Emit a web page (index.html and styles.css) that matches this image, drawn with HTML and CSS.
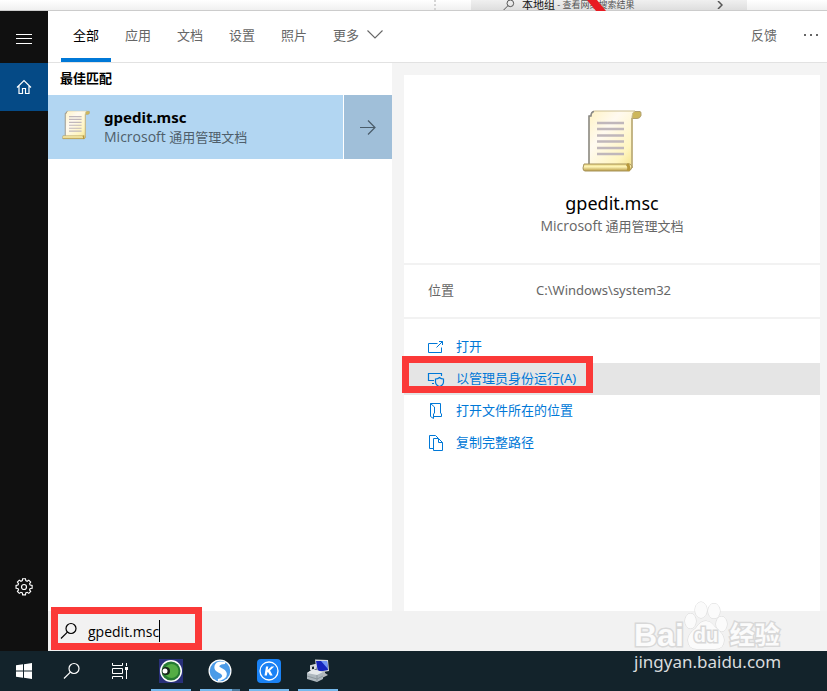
FILE: index.html
```html
<!DOCTYPE html>
<html lang="zh-CN">
<head>
<meta charset="utf-8">
<title>gpedit.msc</title>
<link rel="stylesheet" href="styles.css">
</head>
<body>
<svg class="defs" aria-hidden="true">
  <defs>
    <linearGradient id="paper" x1="0" y1="0" x2="1" y2="1">
      <stop offset="0" stop-color="#fff3c4"/><stop offset=".35" stop-color="#fffaf0"/><stop offset=".75" stop-color="#fff5c0"/><stop offset="1" stop-color="#f3df80"/>
    </linearGradient>
    <linearGradient id="roll" x1="0" y1="0" x2="0" y2="1">
      <stop offset="0" stop-color="#e6d27c"/><stop offset=".4" stop-color="#fff6b8"/><stop offset="1" stop-color="#b99b45"/>
    </linearGradient>
    <symbol id="scroll" viewBox="0 0 60 62">
      <path d="M50 1.500h8q1 0 1 2v2q-1 3-4 3h-5z" fill="#cdb75c" stroke="#b0a070"/>
      <path d="M7 55V6h2q0-5 4-5h40q-3 1-3 6v51H7z" fill="url(#paper)" stroke="#cdbf92"/>
      <path d="M7 54V6h2q0-4 3-4.500" fill="none" stroke="#8a8a88" stroke-width="1.500"/>
      <path d="M50 8v50" fill="none" stroke="#b9a873" stroke-width="1.500"/>
      <path d="M2 54h43q4-1 5 3-1 4-4 4H3q-2 0-2-3z" fill="url(#roll)" stroke="#a6935a"/>
      <path d="M45 54q3 3 1 7" fill="none" stroke="#b8993c" stroke-width="3"/>
      <path d="M15 13h27M15 19h27M15 25.500h27M15 31.500h27M15 38h27M15 44h27" stroke="#c0b7bb" stroke-width="2.500"/>
    </symbol>
    <symbol id="search" viewBox="0 0 18 18">
      <circle cx="11" cy="6.500" r="5" fill="none" stroke="currentColor" stroke-width="1.200"/>
      <path d="M7.400 10.100 1 16.500" fill="none" stroke="currentColor" stroke-width="1.200"/>
    </symbol>
  </defs>
</svg>

<div class="backdrop">
  <span class="dots"></span>
  <div class="suggestion">
    <svg class="mini" viewBox="0 0 18 18"><use href="#search"/></svg>
    <span class="suggestion-name">本地组</span><span class="suggestion-note">&nbsp;- 查看网络搜索结果</span>
    <svg class="more-arrow" viewBox="0 0 6 8"><path d="M1 0l4 4-4 4" fill="none" stroke="#555" stroke-width="1.500"/></svg>
    <svg class="stroke" viewBox="0 0 20 11"><path d="M0 0h10l9 11H9z" fill="#e81b22"/></svg>
  </div>
</div>

<div class="panel">
  <nav class="rail" aria-label="导航">
    <button class="rail-button menu" aria-label="菜单"><svg width="16" height="10" viewBox="0 0 16 10"><path d="M0 .5h16M0 4.500h16M0 9.500h16" stroke="#fff"/></svg></button>
    <button class="rail-button home" aria-label="主页"><svg width="16" height="16" viewBox="0 0 16 16"><path d="M1 8.500 8 1.500l7 7M3 7v7.500h3.500V9.500h3v5H13V7" fill="none" stroke="#fff" stroke-width="1.200"/></svg></button>
    <button class="rail-button settings" aria-label="设置"><svg width="18" height="18" viewBox="0 0 18 18" fill="none" stroke="#fff" stroke-width="1.200"><path d="M7.500 1.500h3l.3 2 1.500.7 1.700-1.200 2 2.100-1.200 1.700.6 1.400 2.100.3v3l-2.100.3-.6 1.400 1.200 1.700-2 2-1.700-1.100-1.500.6-.3 2.100h-3l-.3-2.100-1.500-.6L4 16.900l-2-2 1.200-1.700-.6-1.400-2-.3v-3l2-.3.600-1.400L2 5.100 4 3l1.700 1.200 1.500-.7z" transform="translate(.5 -.7) scale(.95)"/><circle cx="9" cy="9" r="2.500"/></svg></button>
  </nav>

  <div class="content">
    <header class="tabs">
      <button class="tab active">全部</button>
      <button class="tab">应用</button>
      <button class="tab">文档</button>
      <button class="tab">设置</button>
      <button class="tab">照片</button>
      <button class="tab">更多<svg width="16" height="9" viewBox="0 0 16 9"><path d="M.5.500 8 8 15.500.500" fill="none" stroke="#666" stroke-width="1.100"/></svg></button>
      <button class="tab feedback">反馈</button>
      <button class="tab dots-button" aria-label="更多选项"><svg width="16" height="2" viewBox="0 0 16 2"><path d="M1 0h2v2H1zM7 0h2v2H7zM13 0h2v2h-2z" fill="#666"/></svg></button>
    </header>

    <main class="columns">
      <section class="results">
        <h2 class="group">最佳匹配</h2>
        <div class="result">
          <button class="result-main">
            <svg class="result-icon" viewBox="0 0 60 62"><use href="#scroll"/></svg>
            <span class="result-text"><strong>gpedit.msc</strong><span><span class="latin">Microsoft</span> 通用管理文档</span></span>
          </button>
          <button class="result-open" aria-label="展开"><svg width="18" height="16" viewBox="0 0 18 16"><path d="M1 8.500h15M9 1.500l7 7-7 7" fill="none" stroke="#4a5c6a" stroke-width="1.200"/></svg></button>
        </div>
      </section>

      <section class="detail">
        <div class="card">
          <div class="hero">
            <svg class="hero-icon" viewBox="0 0 60 62"><use href="#scroll"/></svg>
            <h1>gpedit.msc</h1>
            <p><span class="latin">Microsoft</span> 通用管理文档</p>
          </div>
          <dl class="place"><dt>位置</dt><dd>C:\Windows\system32</dd></dl>
          <div class="actions">
            <button class="action"><svg viewBox="0 0 16 16"><path d="M9.500 4.500h-9v9h13v-5M8.500 8.500l6-6M11 2.500h3.500V6"/></svg>打开</button>
            <button class="action current"><svg viewBox="0 0 16 16"><path d="M6 9.500H.5v-7h13V5M4 12.500h2" stroke-width="1.200"/><path d="M11.500 6.500Q13 8 15.500 8v3q0 3-4 4.500-4-1.500-4-4.500V8q2.500 0 4-1.500z" stroke-width="1.200"/></svg>以管理员身份运行(A)<span class="mark mark-action"></span></button>
            <button class="action"><svg viewBox="0 0 16 16"><path d="M5 .5h7.500v9.500l1 1v2.500H5M2.500.5v13l3 2V11l1-1V4z"/><path d="M2.500.5H5"/></svg>打开文件所在的位置</button>
            <button class="action"><svg viewBox="0 0 16 16"><path d="M5 13.500H1.500V.500h6L10 3M5.500 3.500h5l4 4v8h-9zM10.500 3.500v4h4"/></svg>复制完整路径</button>
          </div>
        </div>
      </section>
    </main>

    <label class="searchbar">
      <svg width="18" height="18"><use href="#search"/></svg>
      <span class="field"><input class="latin" type="text" value="gpedit.msc" size="9" aria-label="搜索"><span class="caret"></span></span>
      <span class="mark mark-search"></span>
    </label>
  </div>
</div>

<footer class="taskbar">
  <button class="task" aria-label="开始"><svg width="16" height="16" viewBox="0 0 16 16"><path d="M0 2.300 7 1.300v6.200H0zM8 1.200 16 0v7.500H8zM0 8.500h7v6.200l-7-1zM8 8.500h8V16l-8-1.200z" fill="#fff"/></svg></button>
  <button class="task" aria-label="搜索"><svg width="18" height="18" color="#fff"><use href="#search"/></svg></button>
  <button class="task" aria-label="任务视图"><svg width="18" height="16" viewBox="0 0 18 16" fill="none" stroke="#fff"><path d="M1.500 0v2.500h10V0M1.500 16v-2.500h10V16M1.500 5.500h10v5h-10zM15.500 0v3M15.500 7v9"/><path d="M14 4h3v3h-3z" fill="#fff" stroke="none"/></svg></button>
  <button class="task app" aria-label="录像"><svg width="24" height="24" viewBox="0 0 24 24"><path d="M0 0h24v24H0z" fill="#29307a"/><circle cx="12" cy="12" r="11" fill="#fff"/><circle cx="12" cy="12" r="9.500" fill="#267a33"/><circle cx="12.500" cy="12" r="7" fill="#54ad45"/><circle cx="7" cy="12" r="4" fill="#152419"/><circle cx="6" cy="12" r="2.500" fill="#fff"/></svg></button>
  <button class="task app multi" aria-label="搜狗"><svg width="24" height="24" viewBox="0 0 24 24"><circle cx="12" cy="12" r="11.500" fill="#fff"/><circle cx="12" cy="12" r="10.300" fill="#4b9be8"/><path d="M17 4Q9 2 7.500 7q-1 4 4 6 4.500 2 3.500 5-1.500 3-5 3 6-1 7.500-4 1.500-4-3.500-6.500-4.500-2-3.500-4Q12 4 17 4z" fill="#fff" stroke="#fff" stroke-width="2"/></svg></button>
  <button class="task app" aria-label="酷狗"><svg width="24" height="24" viewBox="0 0 24 24"><rect width="24" height="24" rx="4" fill="#1a82f5"/><circle cx="12" cy="12" r="9" fill="none" stroke="#fff" stroke-width="1.300"/><path d="M9 7.500h2.300l-.6 3.500 3.800-3.500h2.800L13 11.500l2.700 5H13l-2-3.500-.6.500-.5 3H7.500z" fill="#fff"/></svg></button>
  <button class="task app" aria-label="管理工具"><svg width="24" height="24" viewBox="0 0 24 24"><path d="M9 .5 22 1l1 11-12 2z" fill="#d5d8dc"/><path d="M10 2l11 0 1 9-10 2z" fill="#1525bd"/><path d="m15 2 6 0 1 8z" fill="#6d92f5"/><path d="m14 13 5-1v2l3 2-6 3-3-3z" fill="#b4b8bc"/><path d="m1 14 6-4 10 3v7l-6 3-10-3z" fill="#aeb8be"/><path d="m1 14 6-4 10 3-6 3z" fill="#e6eaec"/><path d="m1 17 10 3 6-3M11 16v6" fill="none" stroke="#8b969c"/><path d="M5 11V7l4-1v4" fill="none" stroke="#d5d9dc" stroke-width="2"/></svg></button>
</footer>

<div class="watermark" aria-hidden="true">
  <div class="watermark-logo">
    <span>Bai</span>
    <span class="paw"><svg viewBox="0 0 44 50" fill="#fbfbfb" stroke="#d8d8d8"><ellipse cx="17" cy="9" rx="6" ry="8"/><ellipse cx="30" cy="10" rx="6" ry="7.500"/><ellipse cx="6.500" cy="20" rx="5.500" ry="7.500"/><ellipse cx="37.500" cy="23" rx="5.500" ry="7.500"/><path d="M22 20q5 0 9 6 9 7 9 13 0 9-9 9H13q-9 0-9-9 0-6 8-12 4-7 10-7z"/></svg><b>du</b></span>
    <span class="watermark-cn">经验</span>
  </div>
  <div class="watermark-url">jingyan.baidu.com</div>
</div>
</body>
</html>
```
FILE: styles.css
```css
* { box-sizing: border-box; }

body {
  position: relative;
  display: flex;
  flex-direction: column;
  min-height: 100vh;
  margin: 0;
  overflow: hidden;
  color: #000;
  background: #fff;
  font: 13px/20px "Noto Sans", "Noto Sans CJK SC", sans-serif;
}

button {
  margin: 0;
  padding: 0;
  border: 0;
  background: none;
  color: inherit;
  font: inherit;
  text-align: left;
}

svg { flex: none; }
h1, h2, p, dl, dd { margin: 0; }
.defs { position: absolute; width: 0; height: 0; }
.latin { font-family: "Open Sans", sans-serif; font-size: 14px; }

.backdrop {
  display: flex;
  height: 11px;
  border-bottom: 1px solid #ccc;
  background: linear-gradient(#fff, #f0f0f0);
}
.dots { width: 2px; margin-left: 434px; border-left: 2px dotted #d5d5d5; }
.suggestion {
  position: relative;
  display: flex;
  align-items: center;
  width: 276px;
  height: 10px;
  margin-left: 35px;
  padding-left: 32px;
  background: linear-gradient(#f0f0f0, #dedede);
  line-height: 10px;
  white-space: nowrap;
  color: #555;
}
.mini { width: 12px; height: 12px; margin-right: 7px; color: #333; }
.suggestion-name { color: #111; font-size: 11px; }
.suggestion-note { font-size: 9px; }
.more-arrow { width: 6px; height: 8px; margin: 0 24px 0 auto; }
.stroke { position: absolute; left: 116px; top: 0; width: 20px; height: 11px; }

.panel { display: flex; flex: 1; }
.rail { display: flex; flex-direction: column; width: 48px; padding-bottom: 40px; background: #101010; }
.rail-button { display: flex; align-items: center; justify-content: center; height: 48px; }
.menu { height: 52px; padding-top: 4px; }
.home { background: #054a86; }
.settings { margin-top: auto; }

.content { display: flex; flex: 1; flex-direction: column; min-width: 0; }
.tabs { display: flex; height: 52px; padding-left: 13px; border-bottom: 1px solid #e2e2e2; }
.tab {
  display: flex;
  align-items: center;
  gap: 8px;
  padding: 0 13px 4px;
  color: #666;
}
.active { padding: 0 12px; margin-right: 1px; border-bottom: 4px solid #0078d7; color: #000; }
.feedback { margin-left: auto; }
.dots-button { padding-right: 8px; }

.columns { display: flex; flex: 1; background: #f4f4f4; }
.results { width: 344px; background: #fff; }
.group { height: 32px; padding-left: 12px; font-size: 13px; line-height: 30px; }
.result { display: flex; gap: 1px; height: 64px; }
.result-main { display: flex; flex: 1; align-items: center; background: #b2d6f2; }
.result-icon { width: 28px; height: 30px; margin: 0 14px 4px; }
.result-text { display: flex; flex-direction: column; color: #4f5f6b; }
.result-text strong { color: #000; font-size: 15px; }
.result-open { display: flex; align-items: center; justify-content: center; width: 48px; background: #a0bfd9; }

.detail { display: flex; flex: 1; padding: 12px 7px 0 12px; }
.card { flex: 1; background: #fff; }
.hero {
  display: flex;
  flex-direction: column;
  align-items: center;
  height: 190px;
  padding-top: 35px;
  border-bottom: 2px solid #f2f2f2;
}
.hero-icon { width: 60px; height: 62px; margin-bottom: 18px; }
.hero h1 { font-size: 18px; font-weight: 400; line-height: 26px; }
.hero p { color: #666; }
.place { display: flex; height: 54px; padding: 15px 24px; border-bottom: 2px solid #f2f2f2; color: #666; }
.place dt { width: 108px; }
.actions { display: flex; flex-direction: column; padding-top: 12px; }
.action {
  position: relative;
  display: flex;
  align-items: center;
  gap: 12px;
  height: 32px;
  padding: 0 24px 3px;
  color: #0078d7;
}
.action svg { width: 16px; height: 16px; margin-top: 2px; fill: none; stroke: #0078d7; overflow: visible; }
.current { background: #e5e5e5; }

.mark { position: absolute; border: 7px solid #fb3938; pointer-events: none; }
.mark-action { left: -2px; top: -7px; width: 191px; height: 37px; }
.mark-search { left: 3px; top: -4px; width: 151px; height: 43px; }

.searchbar { position: relative; display: flex; align-items: center; gap: 10px; height: 40px; padding-left: 12px; background: #f2f2f2; }
.field { display: flex; align-items: center; }
.field input { width: 71px; height: 24px; padding: 0; border: 0; outline: 0; background: none; color: #000; }
.caret { width: 1px; height: 22px; background: #000; }

.taskbar { display: flex; height: 40px; background: #13232b; }
.task { display: flex; align-items: center; justify-content: center; width: 48px; }
.app { width: 40px; margin: 0 0 0 9px; border-bottom: 2px solid #76b9ed; padding-top: 2px; }
.app:nth-child(4) { margin-left: 7px; }
.multi { border-image: linear-gradient(90deg, #76b9ed 78%, #4c7b9f 78%) 2; }

.watermark { position: absolute; right: 44px; bottom: 18px; width: 149px; color: #fbfbfb; }
.watermark-logo {
  display: flex;
  align-items: flex-end;
  height: 52px;
  font: bold 32px/32px "Liberation Sans", "Noto Sans CJK SC", sans-serif;
  -webkit-text-stroke: 3px #d8d8d8;
  paint-order: stroke fill;
}
.paw { position: relative; width: 44px; height: 50px; }
.paw svg { width: 44px; height: 50px; }
.paw b { position: absolute; left: 10px; bottom: 0; font-size: 20px; }
.watermark-cn { margin-left: 2px; font-size: 25px; }
.watermark-url { color: #d9dcde; font: 17px/22px "Noto Sans", sans-serif; }
```
